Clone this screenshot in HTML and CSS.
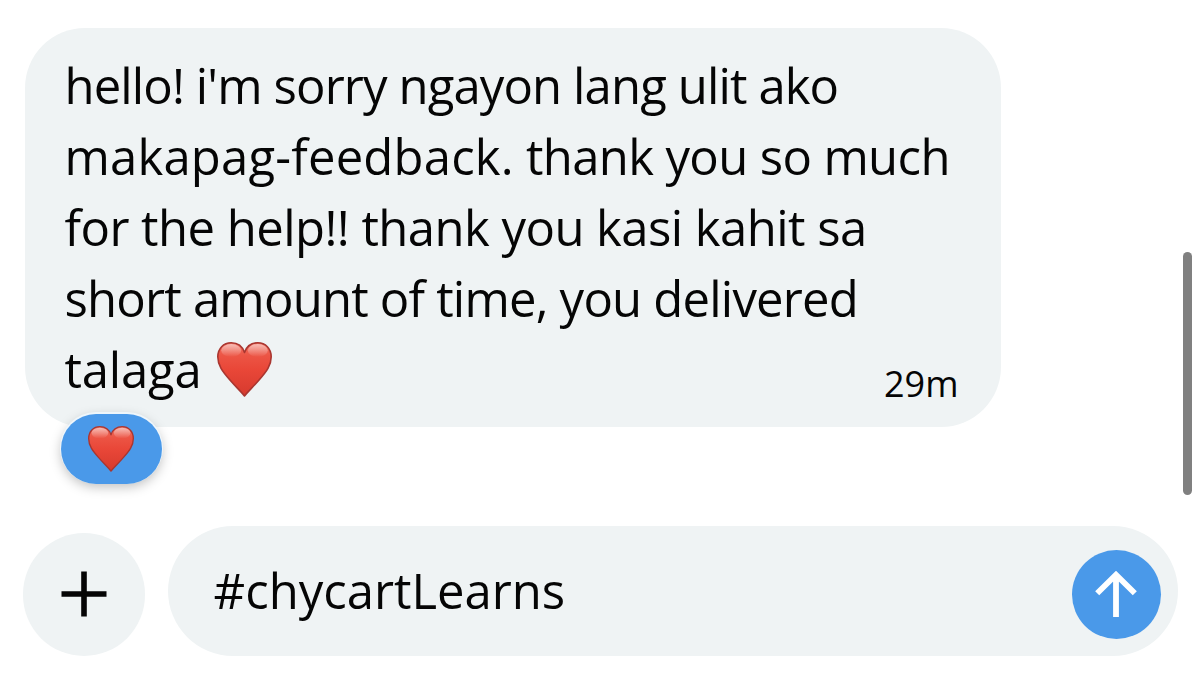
FILE: index.html
```html
<!DOCTYPE html>
<html lang="tl">
<head>
<meta charset="utf-8">
<title>Messages</title>
<link rel="stylesheet" href="styles.css">
</head>
<body>
<svg class="defs" width="0" height="0" aria-hidden="true">
  <defs>
    <linearGradient id="heart-fill" x1="0" y1="0" x2="0" y2="1">
      <stop offset="0" stop-color="#f0705f"/>
      <stop offset=".25" stop-color="#ec5444"/>
      <stop offset=".5" stop-color="#e94738"/>
      <stop offset="1" stop-color="#d63a2e"/>
    </linearGradient>
    <linearGradient id="heart-gloss" x1="0" y1="0" x2="0" y2="1">
      <stop offset="0" stop-color="#fff" stop-opacity=".55"/>
      <stop offset="1" stop-color="#fff" stop-opacity="0"/>
    </linearGradient>
    <symbol id="heart" viewBox="0 0 55 55">
      <path d="M27.5 54C24 49.500 18.500 44.500 12.500 37.500C5.500 29.500.8 23.500.8 14.800C.8 6.500 6.500.8 14.200.8C20.500.8 25.500 4.500 27.500 10.500C29.500 4.500 34.500.8 40.800.8C48.500.8 54.200 6.500 54.200 14.800C54.200 23.500 49.500 29.500 42.500 37.500C36.500 44.500 31 49.500 27.500 54Z" fill="url(#heart-fill)" stroke="#a93630" stroke-width="1.600" stroke-linejoin="round"/>
      <ellipse cx="14.200" cy="8.500" rx="10" ry="6.500" fill="url(#heart-gloss)"/>
      <ellipse cx="40.800" cy="8.500" rx="10" ry="6.500" fill="url(#heart-gloss)"/>
    </symbol>
  </defs>
</svg>
<main class="chat">
  <section class="bubble">
    <p class="message">
      <span class="line l1">hello! i'm sorry ngayon lang ulit ako</span>
      <span class="line l2"><span class="wide">makapag-feedback.</span> thank you so much</span>
      <span class="line l3">for the help!! thank you kasi kahit sa</span>
      <span class="line l4">short amount of time, you delivered</span>
      <span class="line l5"><span class="word">talaga</span><svg class="heart" role="img" aria-label="red heart"><use href="#heart"/></svg></span>
    </p>
    <time class="time">29m</time>
    <div class="reaction"><svg class="heart-small" role="img" aria-label="red heart"><use href="#heart"/></svg></div>
  </section>
  <footer class="composer">
    <button class="add" aria-label="Add">
      <svg width="46" height="46" viewBox="0 0 46 46"><path d="M23 .5V45.500M.5 23H45.500" stroke="#050505" stroke-width="5.600" fill="none"/></svg>
    </button>
    <div class="field">
      <span class="draft">#chycartLearns</span>
      <button class="send" aria-label="Send">
        <svg width="42" height="46" viewBox="0 0 42 46"><path d="M21 46V4M2.200 22.300L21 3.800L39.800 22.300" stroke="#fff" stroke-width="5.800" fill="none"/></svg>
      </button>
    </div>
  </footer>
  <div class="scrollbar"></div>
</main>
</body>
</html>
```
FILE: styles.css
```css
* { box-sizing: border-box; }
body {
  margin: 0;
  background: #fff;
  color: #050505;
  font-family: "Open Sans", "Noto Sans", sans-serif;
}
.defs { position: absolute; }
.chat {
  position: relative;
  width: 1200px;
  height: 678px;
  padding: 28px 22.500px 22.500px 22.500px;
  display: flex;
  flex-direction: column;
  justify-content: space-between;
  overflow: hidden;
}
.bubble {
  position: relative;
  width: 976px;
  height: 399px;
  margin-left: 2.500px;
  padding: 22px 42.500px 0 39.500px;
  border-radius: 60px;
  background: #eff3f4;
  display: flex;
  justify-content: space-between;
}
.message { margin: 0; width: 0; font-size: 49px; line-height: 71px; white-space: nowrap; }
.line { display: block; width: max-content; height: 71px; }
.l1 { letter-spacing: -.87px; }
.l2 { letter-spacing: -.63px; }
.wide { letter-spacing: .2px; }
.l3 { letter-spacing: -.54px; }
.l4 { letter-spacing: -.78px; }
.l5 { display: flex; align-items: center; gap: 16px; letter-spacing: -.2px; }
.heart { width: 55px; height: 55px; }
.time { align-self: flex-end; margin-bottom: 18px; font-size: 36px; line-height: 50px; }
.reaction {
  position: absolute;
  left: 36px;
  top: 386px;
  width: 101px;
  height: 69.500px;
  border-radius: 35px;
  background: #4a99e9;
  box-shadow: 0 -1px 0 1px rgba(240, 247, 253, .9), 0 3px 12px rgba(0, 0, 0, .25);
  display: flex;
  align-items: center;
  justify-content: center;
  padding-right: 1px;
}
.heart-small { width: 46px; height: 46px; }
.composer { display: flex; align-items: flex-end; gap: 22.500px; height: 130px; }
button { border: 0; padding: 0; border-radius: 50%; display: flex; align-items: center; justify-content: center; }
.add { width: 122.500px; height: 122.500px; flex: none; background: #eff3f4; }
.field {
  flex: 1;
  height: 130px;
  padding: 0 17px 0 46px;
  border-radius: 65px;
  background: #eff3f4;
  display: flex;
  align-items: center;
  justify-content: space-between;
}
.draft { font-size: 49px; line-height: 71px; }
.send { width: 89px; height: 89px; margin-top: 7px; background: #4a99e9; }
.scrollbar {
  position: absolute;
  left: 1183px;
  top: 252px;
  width: 9px;
  height: 243px;
  border-radius: 5px;
  background: #808080;
}
```
